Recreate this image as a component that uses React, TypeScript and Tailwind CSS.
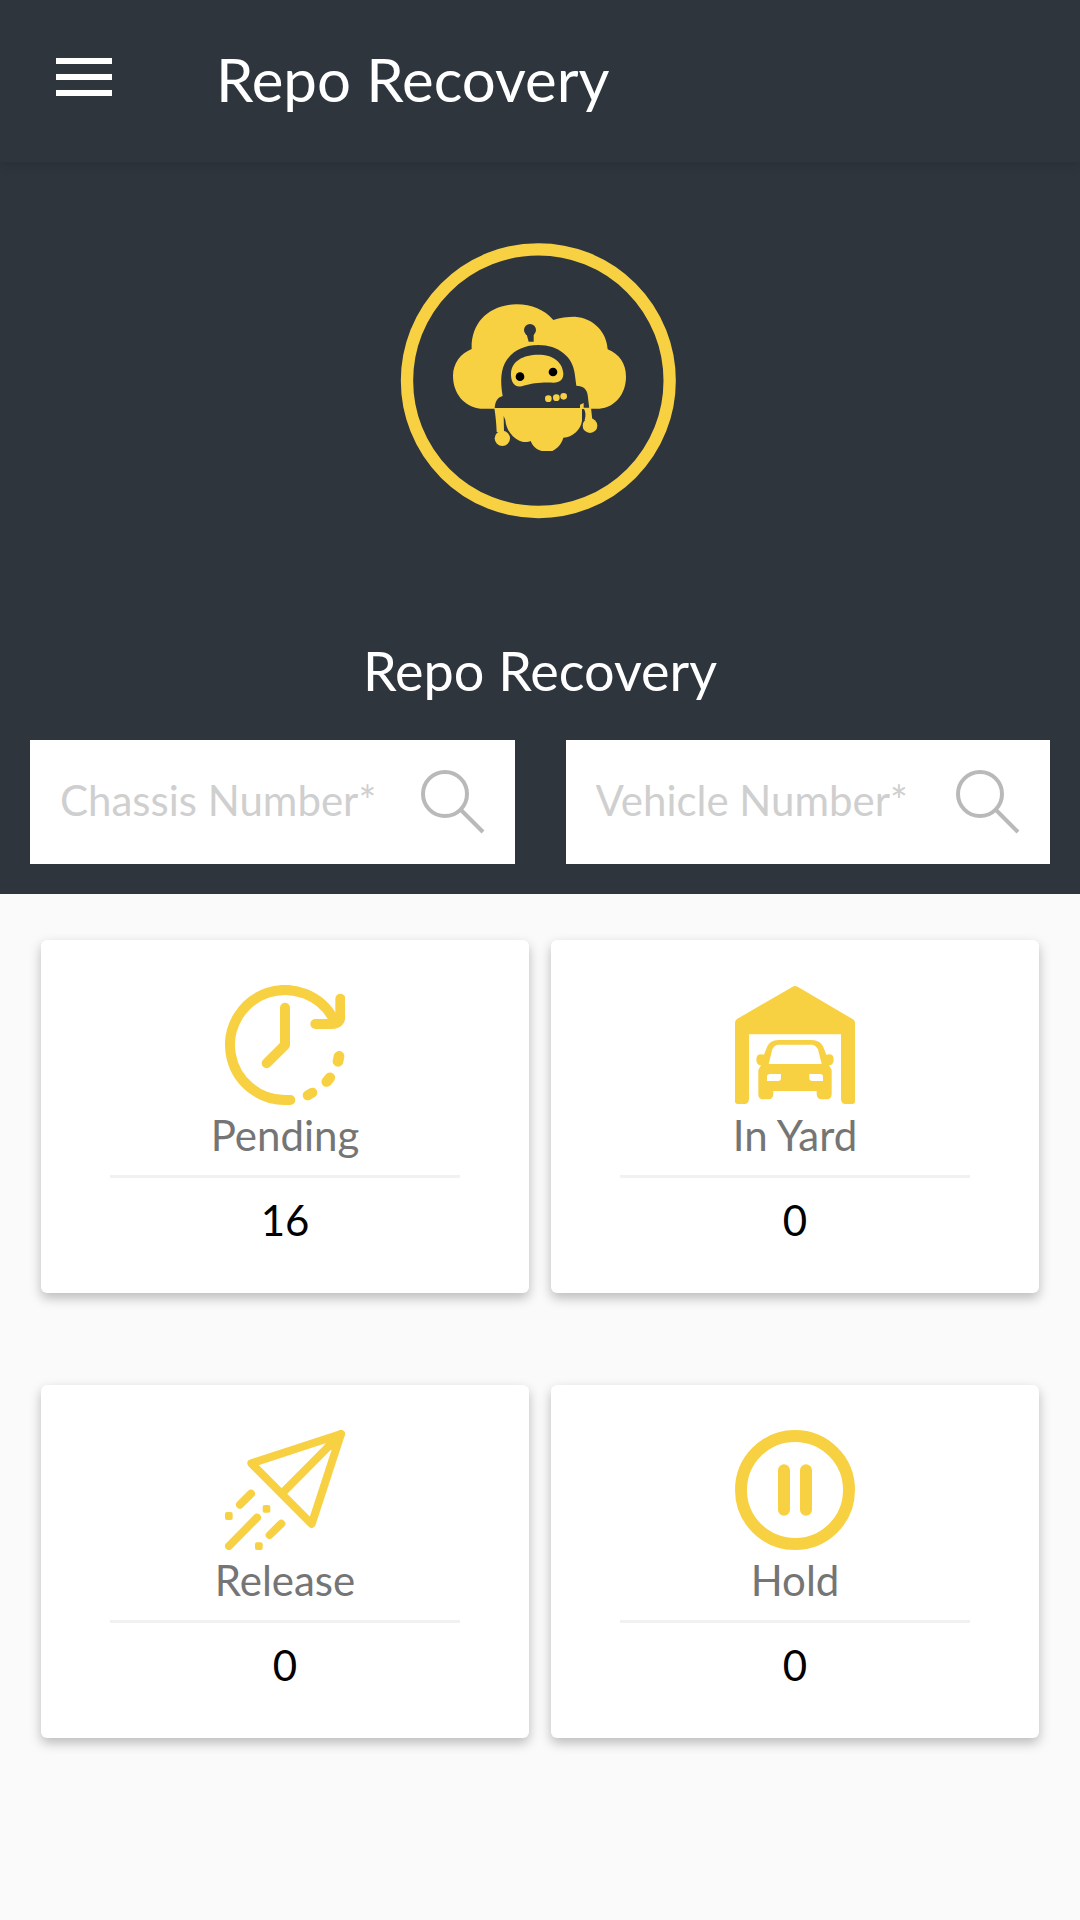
import type { ReactNode } from "react";

const YELLOW = "#f8d143";
const DARK = "#2e353d";

function MenuIcon() {
  return (
    <svg viewBox="0 0 56 38" className="h-[38px] w-14" aria-hidden="true" fill="#fff">
      <rect width="56" height="6" />
      <rect y="16" width="56" height="6" />
      <rect y="32" width="56" height="6" />
    </svg>
  );
}

function SearchIcon() {
  return (
    <svg viewBox="0 0 64 64" className="size-16" aria-hidden="true" fill="none" stroke="#b9b9b9" strokeWidth="4">
      <circle cx="24" cy="24" r="22" />
      <path d="M40 40 62 62" />
    </svg>
  );
}

function Logo() {
  return (
    <svg viewBox="0 0 900 900" className="size-[300px]" role="img" aria-label="Repo Recovery logo">
      <circle cx="445" cy="452" r="394" fill="none" stroke={YELLOW} strokeWidth="37" />
      <path
        fill={YELLOW}
        d="M272 536C222 530 189 490 189 437C189 400 212 370 245 357C242 280 295 224 380 223C425 223 463 239 490 270C510 262 532 260 555 260C610 264 650 305 653 358C688 373 708 400 708 440C708 492 675 532 628 536Z"
      />
      <circle cx="420" cy="300" r="18" fill={DARK} />
      <path fill={DARK} d="M409 310L416 335H431V310Z" />
      <path
        fill={DARK}
        d="M314 536C315 515 322 502 338 498C333 470 332 445 336 425C345 375 390 345 445 345C505 345 548 380 554 430L559 467C580 467 591 478 593 495L598 536Z"
      />
      <path
        fill={YELLOW}
        d="M363 430C365 393 400 374 445 374C490 374 518 397 520 430C520 449 511 458 490 458C450 457 430 459 395 469C373 474 362 455 363 430Z"
      />
      <circle cx="390" cy="440" r="13" fill="#000" />
      <circle cx="489" cy="426" r="13" fill="#000" />
      <circle cx="475" cy="506" r="10" fill={YELLOW} />
      <circle cx="499" cy="503" r="10" fill={YELLOW} />
      <circle cx="521" cy="499" r="10" fill={YELLOW} />
      <path
        fill={YELLOW}
        d="M313 534H576V572C572 600 548 621 520 623C514 643 502 655 487 663H455C438 658 428 648 422 633C413 637 398 637 388 632C366 622 348 598 346 570L341 558L342 606H320C319 580 317 560 313 534Z"
      />
      <circle cx="337" cy="625" r="23" fill={YELLOW} />
      <path fill={YELLOW} d="M570 524L581 519V533H603L607 570H584C588 556 587 545 582 537H570Z" />
      <circle cx="600" cy="587" r="22" fill={YELLOW} />
    </svg>
  );
}

function PendingIcon() {
  return (
    <svg viewBox="75 75 360 360" className="size-[120px]" aria-hidden="true" fill="none" stroke={YELLOW} strokeWidth="30" strokeLinecap="round" strokeLinejoin="round">
      <path d="M271 420H255A165 165 0 1 1 401 178" />
      <path d="M421 116V168Q418 190 396 192H346" />
      <path fill={YELLOW} stroke="none" d="M383 178L408 160L436 172Q434 200 404 206Z" />
      <path d="M255 143V255L200 310" />
      <path d="M417 289L414 304" strokeWidth="32" />
      <path d="M390 353L380 365" strokeWidth="31" />
      <path d="M337 398L323 406" strokeWidth="30" />
    </svg>
  );
}

function GarageIcon() {
  return (
    <svg viewBox="75 75 360 360" className="size-[120px]" aria-hidden="true" fill={YELLOW} fillRule="evenodd">
      <path d="M248 80Q255 76 263 80L429 178Q435 182 435 188V424Q435 432 427 432H404Q394 430 393 418V223H117V418Q116 430 106 432H83Q75 432 75 424V188Q75 182 81 177Z" />
      <path d="M205 240H305Q331 241 339 259L349 284Q371 278 371 299Q371 315 357 316L365 330V404Q363 418 349 418H336Q320 418 320 402V393H190V402Q190 418 174 418H160Q146 418 145 404V330L153 316Q139 315 139 299Q139 278 162 284L172 259Q180 241 205 240ZM204 254Q192 256 187 268L176 312H335L324 268Q318 256 306 254ZM180 342Q171 342 171 350V363H204Q214 362 213 353V342ZM298 342V353Q297 362 307 363H339V350Q339 342 330 342Z" />
    </svg>
  );
}

function ReleaseIcon() {
  return (
    <svg viewBox="75 60 360 360" className="size-[120px]" aria-hidden="true" fill="none" stroke={YELLOW} strokeWidth="24" strokeLinecap="round" strokeLinejoin="round">
      <path d="M423 72L154 160L335 342Z" />
      <path d="M423 72L246 250" />
      <path fill={YELLOW} stroke="none" d="M424 71L360 110L376 102L391 120L412 118Z" />
      <path d="M153 251L120 284M171 323L87 408M244 341L209 375" />
      <g fill={YELLOW} stroke="none">
        <rect x="75" y="306" width="23" height="24" rx="6" />
        <rect x="188" y="285" width="23" height="23" rx="6" />
        <rect x="165" y="397" width="23" height="23" rx="6" />
      </g>
    </svg>
  );
}

function HoldIcon() {
  return (
    <svg viewBox="75 60 360 360" className="size-[120px]" aria-hidden="true" fill="none" stroke={YELLOW} strokeWidth="36">
      <circle cx="255" cy="240" r="162" />
      <path d="M222 181V299M288 181V299" strokeLinecap="round" />
    </svg>
  );
}

function SearchField({ label }: { label: string }) {
  return (
    <div className="flex items-center bg-white p-[30px]">
      <input
        type="text"
        aria-label={label}
        placeholder={label}
        className="h-16 min-w-0 flex-1 bg-transparent pb-1 text-[42px] text-gray-800 outline-none placeholder:text-[#cfcfcf] placeholder:opacity-100"
      />
      <button type="button" aria-label={`Search by ${label}`} className="shrink-0">
        <SearchIcon />
      </button>
    </div>
  );
}

function StatCard({ icon, label, value }: { icon: ReactNode; label: string; value: number }) {
  return (
    <button
      type="button"
      className="flex flex-col items-center rounded-md bg-white pt-[45px] pb-[47px] text-[42px] leading-[52px] shadow-[0_5px_12px_rgba(0,0,0,0.26)]"
    >
      {icon}
      <span className="mt-1 text-[#757575]">{label}</span>
      <span className="mt-3.5 h-[3px] w-[350px] max-w-full bg-[#f1f1f1]" />
      <span className="mt-4 text-black">{value}</span>
    </button>
  );
}

export default function App() {
  return (
    <div className="min-h-screen bg-[#fafafa] font-['Lato',sans-serif]">
      <header className="relative flex items-center bg-[#2e353d] pt-[43px] pb-[47px] pl-14 text-white shadow-[0_2px_10px_rgba(0,0,0,0.14)]">
        <button type="button" aria-label="Open menu" className="mr-[104px] pb-1">
          <MenuIcon />
        </button>
        <h1 className="text-[60px] leading-[72px]">Repo Recovery</h1>
      </header>

      <section className="bg-[#2e353d] px-[30px] pt-[68px] pb-[30px]">
        <div className="flex flex-col items-center">
          <Logo />
          <h2 className="mt-[108px] text-[54px] leading-[65px] text-white">Repo Recovery</h2>
        </div>
        <form className="mt-[37px] grid grid-cols-2 gap-[51px]" onSubmit={(e) => e.preventDefault()}>
          <SearchField label="Chassis Number*" />
          <SearchField label="Vehicle Number*" />
        </form>
      </section>

      <main className="grid grid-cols-2 gap-x-[22px] gap-y-[92px] px-[41px] py-[46px]">
        <StatCard icon={<PendingIcon />} label="Pending" value={16} />
        <StatCard icon={<GarageIcon />} label="In Yard" value={0} />
        <StatCard icon={<ReleaseIcon />} label="Release" value={0} />
        <StatCard icon={<HoldIcon />} label="Hold" value={0} />
      </main>
    </div>
  );
}
